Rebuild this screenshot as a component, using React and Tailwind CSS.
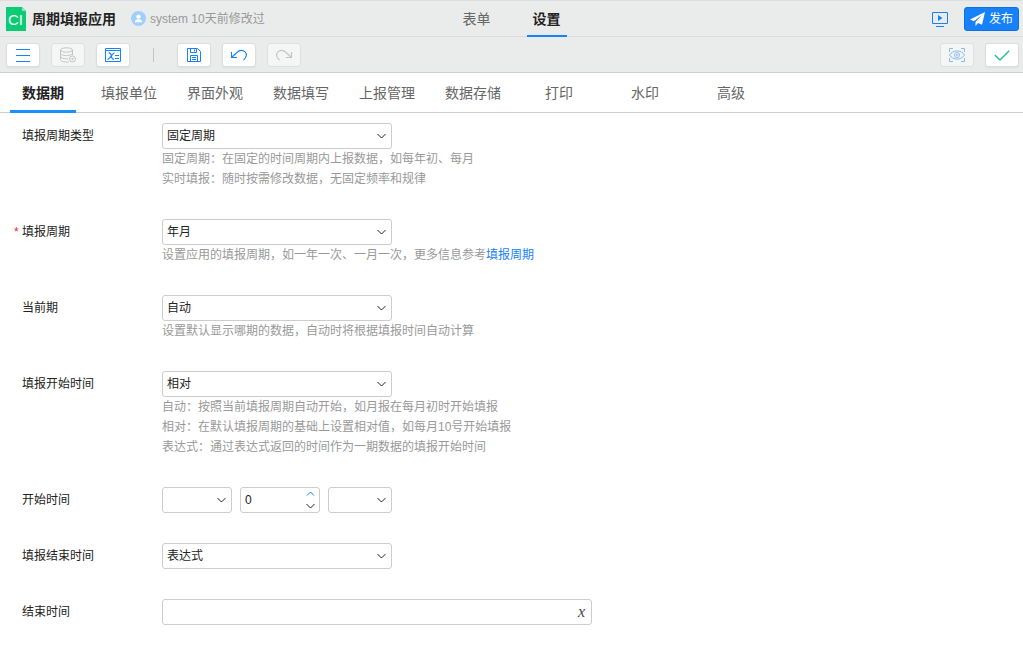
import { useState } from "react";

const MODES = ["表单", "设置"]

const TABS = ["数据期", "填报单位", "界面外观", "数据填写", "上报管理", "数据存储", "打印", "水印", "高级"]

const LogoIcon = () => (
    <svg width="20" height="24" viewBox="0 0 20 24" aria-hidden="true">
        <path d="M0 0H16L20 4V24H0Z" fill="#0ccb75" />
        <path d="M16 0L20 4H16Z" fill="#8be8bd" />
        <text x="2" y="18" fontSize="15" fill="#fff" className="font-['Liberation_Sans',sans-serif]">CI</text>
    </svg>
)

const UserIcon = () => (
    <svg width="15" height="15" viewBox="0 0 15 15" aria-hidden="true">
        <circle cx="7.5" cy="7.5" r="7.5" fill="#9fd0fb" />
        <circle cx="7.5" cy="5.6" r="2.2" fill="#fff" />
        <path d="M3.8 11.2C3.8 9 5.8 8.4 6.4 8.2H8.6C9.2 8.4 11.2 9 11.2 11.2Z" fill="#fff" />
    </svg>
)

const MenuIcon = () => (
    <svg width="16" height="16" viewBox="0 0 16 16" fill="none" stroke="#1781fa">
        <path d="M1 2.5H15M1 8.5H15M1 14.5H15" />
    </svg>
)

const DatabaseIcon = () => (
    <svg width="18" height="16" viewBox="0 0 18 16" fill="none" stroke="#c4c4c4">
        <ellipse cx="7.5" cy="3" rx="6" ry="2.2" />
        <path d="M1.5 3V12.5C1.5 14 4 15 7.5 15C8.4 15 9.2 15 10 14.8M13.5 3V8.2" />
        <path d="M1.5 6.2C1.5 7.5 4 8.6 7.5 8.6S13.5 7.5 13.5 6.2M1.5 9.4C1.5 10.7 4 11.8 7.5 11.8H9.2" />
        <circle cx="13.5" cy="12" r="3" />
        <circle cx="13.5" cy="12" r=".8" />
    </svg>
)

const ExpressionIcon = () => (
    <svg width="16" height="16" viewBox="0 0 16 16" fill="none" stroke="#1781fa">
        <path d="M.5 1.5H15.5V14.5H.5ZM.5 3.5H15.5" />
        <path d="M3.5 6C5.5 5.4 6 7 6.400 9C6.800 11.500 7.500 12.800 9 12M9.500 6C7.500 5.800 4.500 12.800 2.500 12.300" strokeWidth="1.200" />
        <path d="M10 8.5H14M10 11.5H14" />
    </svg>
)

const SaveIcon = () => (
    <svg width="16" height="16" viewBox="0 0 16 16" fill="none" stroke="#1781fa">
        <path d="M1.5 1.5H11.5L14.5 4.5V14.5H1.5Z" />
        <path d="M4.5 1.5V5.5H10.5V1.5M8.5 2.5V4.5M4.5 14.5V8.5H11.5V14.5M6 10.5H10M6 12.5H10" />
    </svg>
)

const UndoIcon = () => (
    <svg width="18" height="16" viewBox="0 0 18 16" fill="none" stroke="#1781fa" strokeWidth="1.1">
        <path d="M1.500 5V10.500H7M1.500 10.500L7.500 5C9.500 3 13 2.800 15 4.800C17.200 7 16.800 10.200 13.500 13" />
    </svg>
)

const RedoIcon = () => (
    <svg width="18" height="16" viewBox="0 0 18 16" fill="none" stroke="#c4c4c4" strokeWidth="1.1">
        <path d="M16.500 5V10.500H11M16.500 10.500L10.500 5C8.500 3 5 2.800 3 4.800C.8 7 1.200 10.200 4.500 13" />
    </svg>
)

const PreviewIcon = () => (
    <svg width="18" height="16" viewBox="0 0 18 16" fill="none" stroke="#8cb9f3">
        <path d="M1.500 5V1.500H5M13 1.500H16.500V5M16.500 11V14.500H13M5 14.500H1.500V11" />
        <path d="M1.500 8C5 2.500 13 2.500 16.500 8C13 13.500 5 13.500 1.500 8Z" />
        <circle cx="9" cy="8" r="2.500" />
        <circle cx="9" cy="8" r=".6" />
    </svg>
)

const CheckIcon = () => (
    <svg width="16" height="16" viewBox="0 0 16 16" fill="none" stroke="#1dbf86" strokeWidth="1.3">
        <path d="M.8 8L6 13L15.200 3.800" />
    </svg>
)

const PlayIcon = () => (
    <svg width="16" height="16" viewBox="0 0 16 16" fill="none" stroke="#1781fa">
        <path d="M.5 1.500H15.500V12.500H.5Z" />
        <path d="M6 4L10.500 7L6 10Z" fill="#1781fa" stroke="none" />
        <path d="M4 15.500H12" />
    </svg>
)

const PlaneIcon = () => (
    <svg width="15" height="14" viewBox="0 0 15 14" fill="#fff" aria-hidden="true">
        <path d="M15 0L0 7.500L3.800 9.200L12 3L5.500 10V14L8 11L12 12.800Z" />
    </svg>
)

const Chevron = ({ up, className = "" }) => (
    <svg width="9" height="6" viewBox="0 0 9 6" fill="none" stroke="currentColor" className={className} aria-hidden="true">
        <path d={up ? "M1 4.500L4.500 1L8 4.500" : "M.5 1L4.500 5L8.500 1"} />
    </svg>
)

const ToolButton = ({ label, disabled, children }) => (
    <button type="button" aria-label={label} disabled={disabled}
        className="flex h-6 w-[34px] items-center justify-center rounded-[3px] border border-[#dcdcdc] bg-white shadow-xs disabled:border-[#dfe1e0] disabled:bg-[#f4f5f5] disabled:shadow-none">
        {children}
    </button>
)

const Select = ({ id, label, options, className }) => (
    <div className={"relative " + className}>
        <select id={id} aria-label={label} className="block h-[26px] w-full appearance-none rounded-[3px] border border-[#ccc] bg-white pr-5 pl-1 focus:outline-none">
            {options.map(item => <option key={item}>{item}</option>)}
        </select>
        <Chevron className="pointer-events-none absolute top-[10px] right-[6px]" />
    </div>
)

const Field = ({ id, label, required, hints = [], children }) => (
    <div className="flex">
        <label htmlFor={id} className="flex h-[26px] w-[162px] shrink-0 items-center pl-[14px]">
            <span className="w-2 text-[#f5222d]">{required && "*"}</span>
            {label}
        </label>
        <div className="min-w-0 flex-1">
            {children}
            {hints.map((hint, i) => <p key={i} className="leading-5 text-[#999]">{hint}</p>)}
        </div>
    </div>
)

const Header = () => {
    const [mode, setMode] = useState("设置")

    return (
        <header className="grid h-[37px] grid-cols-[1fr_auto_1fr] border-t border-b border-t-[#dcdee3] border-b-[#dcdcdc]">
            <div className="flex items-center pl-[6px]">
                <LogoIcon />
                <h1 className="ml-[6px] text-sm font-bold">周期填报应用</h1>
                <span className="ml-[15px] flex items-center gap-1 text-[#999]"><UserIcon />system 10天前修改过</span>
            </div>
            <nav className="flex gap-[30px]">
                {MODES.map(item => (
                    <button key={item} type="button" onClick={() => setMode(item)}
                        className={"-mb-px w-10 border-b-2 pt-[2px] text-sm " + (item === mode ? "border-[#1781fa] font-bold" : "border-transparent text-[#666]")}>
                        {item}
                    </button>
                ))}
            </nav>
            <div className="flex items-center justify-end gap-4 pr-1">
                <button type="button" aria-label="演示"><PlayIcon /></button>
                <button type="button" className="flex h-6 w-[55px] items-center justify-center gap-1 rounded-[3px] border border-[#0f6fe6] bg-[#1781fa] text-white">
                    <PlaneIcon />发布
                </button>
            </div>
        </header>
    )
}

const Toolbar = () => (
    <div className="flex h-9 items-center gap-[11px] border-b border-[#ccc] pr-1 pl-[6px]">
        <ToolButton label="菜单"><MenuIcon /></ToolButton>
        <ToolButton label="数据源" disabled><DatabaseIcon /></ToolButton>
        <ToolButton label="表达式"><ExpressionIcon /></ToolButton>
        <span className="mx-3 h-[14px] w-px bg-[#c4c4c4]" />
        <ToolButton label="保存"><SaveIcon /></ToolButton>
        <ToolButton label="撤销"><UndoIcon /></ToolButton>
        <ToolButton label="重做" disabled><RedoIcon /></ToolButton>
        <div className="ml-auto flex gap-[11px]">
            <ToolButton label="预览" disabled><PreviewIcon /></ToolButton>
            <ToolButton label="确定"><CheckIcon /></ToolButton>
        </div>
    </div>
)

const App = () => {
    const [tab, setTab] = useState("数据期")
    const [offset, setOffset] = useState(0)
    const [endTime, setEndTime] = useState("")

    return (
        <div className="min-h-screen bg-white font-['Liberation_Sans','Noto_Sans_CJK_SC',sans-serif] text-xs text-[#222]">
            <div className="bg-[#eaeceb]">
                <Header />
                <Toolbar />
            </div>

            <nav className="flex h-10 border-b border-[#ccc]">
                {TABS.map(item => (
                    <button key={item} type="button" onClick={() => setTab(item)}
                        className={"mx-[10px] -mb-px w-[66px] border-b-3 pt-[2px] text-sm whitespace-nowrap " + (item === tab ? "border-[#1890ff] font-bold" : "border-transparent text-[#666]")}>
                        {item}
                    </button>
                ))}
            </nav>

            <form className="flex flex-col gap-[30px] pt-[10px] pb-6" onSubmit={e => e.preventDefault()}>
                <Field id="type" label="填报周期类型" hints={["固定周期：在固定的时间周期内上报数据，如每年初、每月", "实时填报：随时按需修改数据，无固定频率和规律"]}>
                    <Select id="type" options={["固定周期", "实时填报"]} className="w-[230px]" />
                </Field>
                <Field id="period" label="填报周期" required hints={[<>设置应用的填报周期，如一年一次、一月一次，更多信息参考<a href="#period" className="text-[#1781fa]">填报周期</a></>]}>
                    <Select id="period" options={["年月", "年", "年季"]} className="w-[230px]" />
                </Field>
                <Field id="current" label="当前期" hints={["设置默认显示哪期的数据，自动时将根据填报时间自动计算"]}>
                    <Select id="current" options={["自动", "表达式"]} className="w-[230px]" />
                </Field>
                <Field id="startType" label="填报开始时间" hints={["自动：按照当前填报周期自动开始，如月报在每月初时开始填报", "相对：在默认填报周期的基础上设置相对值，如每月10号开始填报", "表达式：通过表达式返回的时间作为一期数据的填报开始时间"]}>
                    <Select id="startType" options={["相对", "自动", "表达式"]} className="w-[230px]" />
                </Field>
                <Field id="offset" label="开始时间">
                    <div className="flex gap-2">
                        <Select label="方向" options={["", "期初", "期末"]} className="w-[70px]" />
                        <div className="relative w-20">
                            <input id="offset" value={offset} onChange={e => setOffset(Number(e.target.value) || 0)} className="block h-[26px] w-full rounded-[3px] border border-[#ccc] pl-1 focus:outline-none" />
                            <button type="button" aria-label="增加" onClick={() => setOffset(offset + 1)} className="absolute top-1 right-[5px] text-[#1781fa]"><Chevron up className="block" /></button>
                            <button type="button" aria-label="减少" onClick={() => setOffset(offset - 1)} className="absolute right-[5px] bottom-1"><Chevron className="block" /></button>
                        </div>
                        <Select label="单位" options={["", "天", "月"]} className="w-16" />
                    </div>
                </Field>
                <Field id="endType" label="填报结束时间">
                    <Select id="endType" options={["表达式", "自动", "相对"]} className="w-[230px]" />
                </Field>
                <Field id="endTime" label="结束时间">
                    <div className="relative w-[430px] max-w-full">
                        <input id="endTime" value={endTime} onChange={e => setEndTime(e.target.value)} className="block h-[26px] w-full rounded-[3px] border border-[#ccc] pr-6 pl-1 focus:outline-none" />
                        <button type="button" aria-label="编辑表达式" className="absolute top-0 right-[7px] h-[26px] font-['Liberation_Serif',serif] text-base text-[#444] italic">x</button>
                    </div>
                </Field>
            </form>
        </div>
    )
}

export default App;
